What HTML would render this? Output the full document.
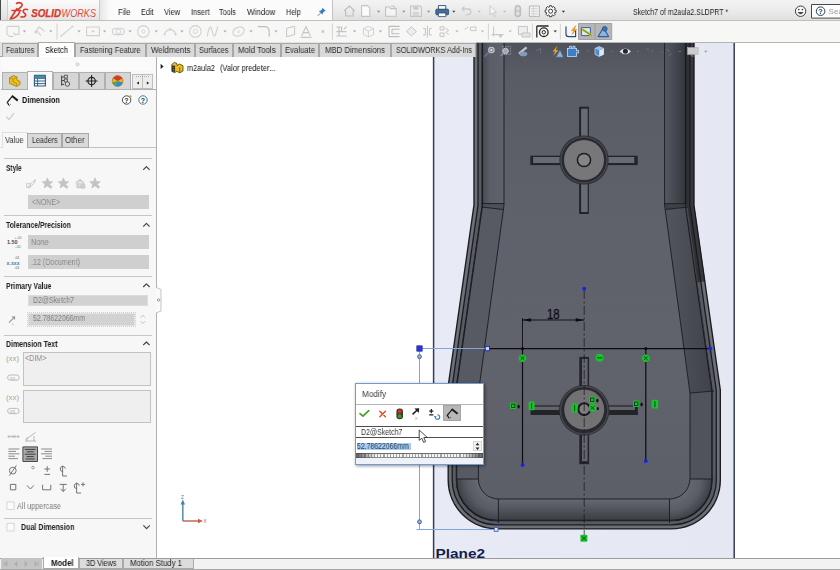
<!DOCTYPE html>
<html lang="en">
<head>
<meta charset="utf-8">
<title>Sketch7 of m2aula2.SLDPRT</title>
<style>
*{box-sizing:border-box;margin:0;padding:0}
html,body{width:840px;height:570px;overflow:hidden;background:#fff}
body{position:relative;font-family:"Liberation Sans",sans-serif;font-size:8px;color:#1a1a1a;line-height:1}
.a{position:absolute}
.t{position:absolute;white-space:nowrap;line-height:10px;height:10px;will-change:transform}
/* top chrome */
#title{left:0;top:0;width:840px;height:21px;background:linear-gradient(#f3f3f3 0,#ececec 45%,#dfdfdf 100%)}
#logo{left:7px;top:0;width:93px;height:21px;background:linear-gradient(#fbfbfb 0,#f1f1f1 50%,#e3e3e3 100%);border-left:1px solid #cfcfcf;border-right:1px solid #c9c9c9}
#menu{left:100px;top:0;width:233px;height:21px;background:linear-gradient(90deg,#e6e6e6 0,#fbfbfb 10px);border-right:1px solid #c4c4c4}
#tb2{left:0;top:20.4px;width:840px;height:21.6px;background:#f7f7f6;border-top:1.4px solid #bfbfbf}
#tabs{left:0;top:42px;width:476px;height:15px;background:#e3e3e3;border-bottom:1px solid #a9a9a9}
.tab{position:absolute;top:43px;height:14px;background:#d9d9d9;border:1px solid #a8a8a8;border-bottom:none;font-size:8.1px;line-height:12px;text-align:center;white-space:nowrap;color:#222}
.tab.on{background:#fff;top:42px;height:15px;color:#000}
/* left panel */
#panel{left:0;top:57px;width:157px;height:501px;background:#f7f7f7;border-right:1.2px solid #b0b0b0}
.ptab{position:absolute;top:71.6px;height:17.4px;width:26px;background:#d6d6d6;border:1px solid #b0b0b0;border-bottom:none}
.ptab.on{background:#f9f9f9;top:70.6px;height:19.4px}
.sec{position:absolute;left:4px;width:148px;height:1px;background:#c6c6c6}
.hd{position:absolute;left:6px;font-weight:bold;font-size:8px;line-height:10px;white-space:nowrap;color:#222}
.chev{position:absolute;left:142px;width:9px;height:6px}
.dd{position:absolute;left:28px;width:121px;height:13.6px;background:#cfcfcf;font-size:8px;line-height:13px;padding-left:4px;color:#7d7d7d;white-space:nowrap}
.box{position:absolute;left:23px;width:128px;background:#efefef;border:1px solid #c2c2c2}
#btabs{left:0;top:558px;width:840px;height:12px;background:#f2f2f2;border-top:1px solid #9c9c9c;border-bottom:1.4px solid #a8a8a8}
</style>
</head>
<body>

<!-- ===== graphics viewport ===== -->
<svg class="a" id="vp" style="left:0;top:0" width="840" height="570" viewBox="0 0 840 570">
<defs>
<linearGradient id="gFloor" x1="0" y1="0" x2="0" y2="1">
<stop offset="0" stop-color="#4f525a"/><stop offset="0.07" stop-color="#595c64"/><stop offset="0.4" stop-color="#5f626b"/><stop offset="0.75" stop-color="#60636c"/><stop offset="1" stop-color="#5c5f68"/>
</linearGradient>
<linearGradient id="gPlane" x1="0" y1="0" x2="1" y2="0">
<stop offset="0" stop-color="#e8ebf5"/><stop offset="1" stop-color="#e5e8f2"/>
</linearGradient>
<linearGradient id="gRW" x1="0" y1="0" x2="1" y2="0">
<stop offset="0" stop-color="#555861"/><stop offset="1" stop-color="#34363d"/>
</linearGradient>
<linearGradient id="gBW" x1="0" y1="0" x2="0" y2="1">
<stop offset="0" stop-color="#666972"/><stop offset="1" stop-color="#3b3d44"/>
</linearGradient>
<linearGradient id="gLW" x1="0" y1="0" x2="1" y2="0"><stop offset="0" stop-color="#474a52"/><stop offset="0.35" stop-color="#5b5e67"/><stop offset="1" stop-color="#5f626b"/></linearGradient>
<linearGradient id="gRW2" x1="0" y1="0" x2="1" y2="0"><stop offset="0" stop-color="#53565e"/><stop offset="1" stop-color="#40424a"/></linearGradient>
<radialGradient id="gCL" gradientUnits="userSpaceOnUse" cx="498.4" cy="479" r="42"><stop offset="0.45" stop-color="#666972"/><stop offset="0.75" stop-color="#585b64"/><stop offset="1" stop-color="#3e4047"/></radialGradient>
<radialGradient id="gCR" gradientUnits="userSpaceOnUse" cx="669.5" cy="479" r="42"><stop offset="0.45" stop-color="#666972"/><stop offset="0.75" stop-color="#5a5d66"/><stop offset="1" stop-color="#3e4047"/></radialGradient>
</defs>
<!-- plane -->
<rect x="433" y="43" width="301.5" height="515" fill="url(#gPlane)"/>
<line x1="433.6" y1="43" x2="433.6" y2="558" stroke="#323c5e" stroke-width="1.5"/>
<line x1="734.2" y1="43" x2="734.2" y2="558" stroke="#323c5e" stroke-width="1.5"/>
<!-- outer body (rim colour) -->
<path d="M473.30 42 L473.30 205.00 L447.50 386.00 L447.50 480 A49.50 49.50 0 0 0 497 529.50 L671.5 529.50 A49.50 49.50 0 0 0 721.00 480 L721.00 390.00 L694.60 205.00 L694.60 42 Z" fill="#1b1c20"/>
<path d="M476.00 42 L476.00 205.19 L450.20 386.19 L450.20 480 A46.80 46.80 0 0 0 497 526.80 L671.5 526.80 A46.80 46.80 0 0 0 718.30 480 L718.30 390.19 L691.90 205.19 L691.90 42" fill="none" stroke="#6d7077" stroke-width="2.7"/>
<path d="M480.10 42 L480.10 205.48 L454.30 386.48 L454.30 480 A42.70 42.70 0 0 0 497 522.70 L671.5 522.70 A42.70 42.70 0 0 0 714.20 480 L714.20 390.48 L687.80 205.48 L687.80 42" fill="none" stroke="#585b63" stroke-width="2.9"/>
<path d="M482.50 42 L482.50 205.65 L456.70 386.65 L456.70 480 A40.30 40.30 0 0 0 497 520.30 L671.5 520.30 A40.30 40.30 0 0 0 711.80 480 L711.80 390.65 L685.40 205.65 L685.40 42 Z" fill="#5a5d66"/>
<path d="M690 42 L690 205.4 L701 282" fill="none" stroke="#18191d" stroke-opacity="0.62" stroke-width="8.6"/>
<!-- left upper wall -->
<path d="M482.5 42 L504 42 L504 203.6 L482.5 203.6 Z" fill="url(#gLW)"/>
<path d="M481.5 203.6 L504 203.6 L502.8 209.5 L482 207 Z" fill="#4d5058"/>
<!-- left lower wall -->
<path d="M482 207 L502.8 209.5 L478.4 393 L478.4 479 L456.3 479 L456.3 388 Z" fill="#575a63"/>
<!-- right upper wall -->
<path d="M664.6 42 L686 42 L686 203.7 L664.6 203.7 Z" fill="url(#gRW)"/>
<path d="M664.6 203.7 L686.5 203.7 L687.5 207 L665.5 209.5 Z" fill="#3f4148"/>
<!-- right lower wall -->
<path d="M665.5 209.5 L687.5 207 L712.2 391 L690 393 Z" fill="url(#gRW2)"/>
<path d="M690 393 L712.2 391 L712.2 479 L690 479 Z" fill="#50535b"/>
<!-- bottom wall -->
<path d="M498.4 499 L669.5 499 L669.5 520.7 L498.4 520.7 Z" fill="url(#gBW)"/>
<!-- corner walls -->
<path d="M456.3 479 L478.4 479 A20 20 0 0 0 498.4 499 L498.4 520.7 L497 520.7 A40.7 40.7 0 0 1 456.3 480 Z" fill="url(#gCL)"/>
<path d="M712.2 479 L690 479 A20.5 20.5 0 0 1 669.5 499 L669.5 520.7 L671.5 520.7 A40.7 40.7 0 0 0 712.2 480 Z" fill="url(#gCR)"/>
<!-- floor -->
<path id="floor" d="M504 42 L504 205 L478.4 393 L478.4 479 A20 20 0 0 0 498.4 499 L669.5 499 A20.5 20.5 0 0 0 690 479 L690 393 L664.6 205 L664.6 42 Z" fill="url(#gFloor)"/>
<!-- edge lines -->
<g fill="none" stroke="#1a1b1f" stroke-width="0.9">
<path d="M504 42 L504 205 L478.4 393 L478.4 479 A20 20 0 0 0 498.4 499 L669.5 499 A20.5 20.5 0 0 0 690 479 L690 393 L664.6 205 L664.6 42"/>
<path d="M481 203.6 L504 203.6"/><path d="M482 207 L502.8 209.5"/>
<path d="M664.6 203.7 L687 203.7"/><path d="M665.5 209.5 L688 207"/>
<path d="M690 393 L714 391"/><path d="M690 479 L713 479"/>
<path d="M456 479 L478.4 479"/>
<path d="M498.4 499 L498.4 523"/><path d="M669.5 499 L669.5 523"/>
<path d="M482.50 42 L482.50 205.65 L456.70 386.65 L456.70 480 A40.30 40.30 0 0 0 497 520.30 L671.5 520.30 A40.30 40.30 0 0 0 711.80 480 L711.80 390.65 L685.40 205.65 L685.40 42" stroke-width="1.1"/>
</g>
<!-- crosses -->
<g>
<rect x="579.1" y="106.7" width="9.8" height="31.3" fill="#232428"/>
<rect x="581.1" y="108.7" width="6.6" height="29.3" fill="#686b74"/>
<rect x="579.1" y="182.0" width="9.8" height="32.0" fill="#232428"/>
<rect x="581.1" y="182.0" width="6.6" height="30.0" fill="#686b74"/>
<rect x="530.3" y="155.7" width="31.3" height="9.4" fill="#232428"/>
<rect x="533.1" y="157.0" width="29.3" height="6" fill="#686b74"/>
<rect x="606.0" y="155.7" width="31.7" height="9.4" fill="#232428"/>
<rect x="606.0" y="157.0" width="28.3" height="6" fill="#686b74"/>
<circle cx="584" cy="160" r="24.6" fill="#292a2f"/>
<circle cx="584" cy="160" r="23.1" fill="none" stroke="#44464d" stroke-width="1.5"/>
<circle cx="584" cy="160" r="20" fill="#77777a"/>
<circle cx="584" cy="160" r="6.6" fill="#858587" stroke="#1c1c1f" stroke-width="1.5"/>
</g>
<g>
<rect x="579.3" y="356.9" width="9.8" height="31.3" fill="#232428"/>
<rect x="582.0" y="358.9" width="5.6" height="29.3" fill="#62656e"/>
<rect x="579.3" y="432.2" width="9.8" height="32.0" fill="#232428"/>
<rect x="582.0" y="432.2" width="5.6" height="29.0" fill="#62656e"/>
<rect x="530.5" y="405.4" width="31.3" height="9.6" fill="#232428"/>
<rect x="533.3" y="406.6" width="29.3" height="3.4" fill="#62656e"/>
<rect x="606.2" y="405.4" width="31.7" height="9.6" fill="#232428"/>
<rect x="606.2" y="406.6" width="28.7" height="3.4" fill="#62656e"/>
<circle cx="584.2" cy="410.2" r="25.2" fill="#292a2f"/>
<circle cx="584.2" cy="410.2" r="23.7" fill="none" stroke="#44464d" stroke-width="1.5"/>
<circle cx="584.2" cy="409.59999999999997" r="20" fill="#727275"/>
<circle cx="584.2" cy="409.2" r="5.9" fill="#7e7e80" stroke="#1a1a1d" stroke-width="2.1"/>
</g>
<!-- sketch entities -->
<g id="sketch">
<!-- selected dimension leaders (light blue) -->
<g stroke="#7fa6e0" stroke-width="1" fill="none">
<line x1="419.5" y1="348.5" x2="487" y2="348.5"/>
<line x1="419.5" y1="348.5" x2="419.5" y2="529.5"/>
<line x1="416.5" y1="529.5" x2="497" y2="529.5"/>
</g>
<rect x="416.8" y="345.8" width="5.4" height="5.4" fill="#2a35d8" stroke="#1a1f9a" stroke-width="0.6"/>
<circle cx="419.5" cy="356.7" r="1.9" fill="#9db4dc" stroke="#34509a" stroke-width="0.9"/>
<circle cx="419.5" cy="521.8" r="1.9" fill="#9db4dc" stroke="#34509a" stroke-width="0.9"/>
<rect x="494.2" y="527.5" width="3.8" height="3.8" fill="#dfe6f6" stroke="#3d62b8" stroke-width="0.9"/>
<!-- centreline -->
<line x1="584.2" y1="290" x2="584.2" y2="536" stroke="#17181c" stroke-opacity="0.8" stroke-width="0.9" stroke-dasharray="9 2.5 2 2.5"/>
<circle cx="584.2" cy="288.8" r="2" fill="#1a22e6"/>
<!-- horizontal construction line -->
<line x1="489" y1="348.6" x2="710" y2="348.6" stroke="#0c0c0e" stroke-width="1.2"/>
<rect x="485.3" y="346.5" width="4.2" height="4.2" fill="#c8d2f4" stroke="#2430d0" stroke-width="1"/>
<circle cx="710.2" cy="348.6" r="2.1" fill="#1a22e6"/>
<!-- vertical lines -->
<line x1="522.5" y1="318" x2="522.5" y2="348" stroke="#0c0c0e" stroke-width="0.9"/>
<line x1="522.5" y1="348.6" x2="522.5" y2="464" stroke="#0c0c0e" stroke-width="1.2"/>
<line x1="645.8" y1="348.6" x2="645.8" y2="460" stroke="#0c0c0e" stroke-width="1.2"/>
<circle cx="522.5" cy="348.6" r="1.6" fill="#0c0c0e"/>
<circle cx="645.8" cy="348.6" r="1.6" fill="#0c0c0e"/>
<circle cx="522.6" cy="465" r="2" fill="#1a22e6"/>
<circle cx="645.8" cy="461" r="2" fill="#1a22e6"/>
<!-- dimension 18 -->
<line x1="522.5" y1="320" x2="584.2" y2="320" stroke="#0c0c0e" stroke-width="0.9"/>
<path d="M522.5 320 L531 318.2 L531 321.8 Z M584.2 320 L575.7 318.2 L575.7 321.8 Z" fill="#0c0c0e"/>
<text x="553.2" y="319" font-family="Liberation Sans, sans-serif" font-size="14.8" text-anchor="middle" fill="#0c0c0e" stroke="#0c0c0e" stroke-width="0.3" textLength="12.6" lengthAdjust="spacingAndGlyphs">18</text>
<!-- relation markers -->
<g fill="#16c42c">
<circle cx="522.5" cy="358.2" r="3.8"/><circle cx="645.8" cy="358.2" r="3.8"/>
<circle cx="599.6" cy="357.8" r="4"/>
<rect x="510" y="402.6" width="6.4" height="6.4" rx="1"/><rect x="528.6" y="401.6" width="6" height="8.6" rx="1.5"/>
<rect x="633" y="400.6" width="6.4" height="6.4" rx="1"/><rect x="651.6" y="399.8" width="6.6" height="8.6" rx="1.5"/>
<rect x="571.6" y="403.6" width="6" height="9" rx="1.5"/>
<rect x="589" y="396.6" width="6.4" height="6.4" rx="1"/><rect x="589" y="404.4" width="7" height="7" rx="1.5"/>
<rect x="580.4" y="534.8" width="7" height="7" rx="0.8"/>
</g>
<g stroke="#0a3a10" stroke-width="0.9" fill="none">
<path d="M520.6 356.4 L524.4 360 M524.4 356.4 L520.6 360"/><path d="M643.9 356.4 L647.7 360 M647.7 356.4 L643.9 360"/>
<path d="M597 357.8 L602.2 357.8"/>
<rect x="511.5" y="404.1" width="3.4" height="3.4"/><rect x="634.5" y="402.1" width="3.4" height="3.4"/><rect x="590.5" y="398.1" width="3.4" height="3.4"/>
<path d="M531.6 403 L531.6 409"/><path d="M654.9 401.2 L654.9 407.2"/><path d="M574.6 405 L574.6 411.2"/>
<path d="M590.6 406 L594.4 409.8 M594.4 406 L590.6 409.8"/>
<path d="M582 536.4 L585.8 540.2 M585.8 536.4 L582 540.2"/>
</g>
<g fill="#0b0b0c">
<ellipse cx="518.6" cy="406.6" rx="1.1" ry="1.9"/><ellipse cx="641.6" cy="404.4" rx="1.1" ry="1.9"/><ellipse cx="597.4" cy="400.6" rx="1.1" ry="1.9"/><ellipse cx="597.8" cy="408.6" rx="1" ry="1.6"/>
</g>
</g>
<text x="435.5" y="557.6" font-family="Liberation Sans, sans-serif" font-weight="bold" font-size="12.6" fill="#141c50" textLength="49.5" lengthAdjust="spacingAndGlyphs">Plane2</text>
</svg>
<!-- ===== title bar ===== -->
<div class="a" id="title"></div>
<div class="a" style="left:0;top:0;width:1px;height:570px;background:#4a4a4a"></div>
<div class="a" id="logo"></div>
<div class="a" id="menu"></div>
<svg class="a" style="left:9px;top:1px" width="92" height="20" viewBox="0 0 92 20">
<g transform="translate(-0.9,0) scale(1.1)"><path d="M7.6 2.2 C10.4 0.6 14.4 2.4 12 5.2 L8.8 8 M3.6 8.6 L11.4 8.6 M8 7 L2 16.4 C6.2 15.8 9.2 13.6 10.6 9.8 M17.6 7.8 C14.6 6.8 12.4 8.8 14.6 10.8 C17 12.6 16.2 15 11.8 14.4" fill="none" stroke="#d93a2b" stroke-width="1.5" stroke-linecap="round" stroke-linejoin="round"/></g>
<text x="22.2" y="16" font-family="Liberation Sans, sans-serif" font-size="10" font-weight="bold" font-style="italic" fill="#d8392b" stroke="#d8392b" stroke-width="0.25" textLength="30" lengthAdjust="spacingAndGlyphs">SOLID</text>
<text x="52.6" y="16" font-family="Liberation Sans, sans-serif" font-size="10" font-style="italic" fill="#dc4a3c" textLength="34.4" lengthAdjust="spacingAndGlyphs">WORKS</text>
</svg>
<div class="t" style="left:118.2px;top:7px;font-size:8.5px;transform:scaleX(0.9195);transform-origin:0 50%;color:#1c1c1c">File</div>
<div class="t" style="left:140.6px;top:7px;font-size:8.5px;transform:scaleX(0.8597);transform-origin:0 50%;color:#1c1c1c">Edit</div>
<div class="t" style="left:163.8px;top:7px;font-size:8.5px;transform:scaleX(0.8752);transform-origin:0 50%;color:#1c1c1c">View</div>
<div class="t" style="left:190.6px;top:7px;font-size:8.5px;transform:scaleX(0.8747);transform-origin:0 50%;color:#1c1c1c">Insert</div>
<div class="t" style="left:219px;top:7px;font-size:8.5px;transform:scaleX(0.8567);transform-origin:0 50%;color:#1c1c1c">Tools</div>
<div class="t" style="left:246.8px;top:7px;font-size:8.5px;transform:scaleX(0.9393);transform-origin:0 50%;color:#1c1c1c">Window</div>
<div class="t" style="left:285.6px;top:7px;font-size:8.5px;transform:scaleX(0.8465);transform-origin:0 50%;color:#1c1c1c">Help</div>
<svg class="a" style="left:316.6px;top:6.8px" width="9.6" height="9.6" viewBox="0 0 11 11"><path d="M6.4 1 L10 4.6 L8.6 5 L6.6 7 L6.4 9 L2 4.6 L4 4.4 L6 2.4 Z" fill="#3a7ac2"/><path d="M4 7 L1 10" stroke="#3a7ac2" stroke-width="1.1"/></svg>
<div class="t" style="left:632.5px;top:6.6px;font-size:8.4px;transform:scaleX(0.8283);transform-origin:0 50%;color:#222">Sketch7 of m2aula2.SLDPRT *</div>
<div class="a" id="tb2"></div>
<div class="a" id="tabs"></div><div class="a" style="left:476px;top:41.6px;width:364px;height:1px;background:#b4b4b4"></div>
<svg class="a" style="left:0;top:0" width="840" height="43" viewBox="0 0 840 43" fill="none" stroke-linejoin="round">
<path d="M344 11 L349.4 6 L354.8 11 M345.6 10.4 L345.6 16 L353.2 16 L353.2 10.4" stroke="#bdbdbd" stroke-width="1.1"/><path d="M361.6 5.6 L367.6 5.6 L369.8 7.8 L369.8 16.4 L361.6 16.4 Z" stroke="#c4c4c4" stroke-width="1.1" fill="#fbfbfb"/><path d="M377.0 10.7 L380.20000000000005 10.7 L378.6 12.7 Z" fill="#8e8e8e"/><path d="M385.6 16.2 L385.6 7 L389.4 7 L390.6 8.6 L396.2 8.6 L396.2 16.2 Z" stroke="#c2c2c2" stroke-width="1.1" fill="#f4f4f4"/><path d="M391 6.2 L394.6 6.2 L394.6 9" stroke="#c2c2c2" stroke-width="1"/><path d="M402.2 10.7 L405.40000000000003 10.7 L403.8 12.7 Z" fill="#8e8e8e"/><path d="M410.6 6 L420 6 L421.4 7.4 L421.4 16.4 L410.6 16.4 Z" stroke="#c2c2c2" stroke-width="1.1" fill="#f1f1f1"/><rect x="413" y="6.4" width="5.6" height="3.4" fill="#cdcdcd"/><rect x="412.6" y="11.6" width="6.6" height="4.6" fill="#d6d6d6"/><path d="M427.0 10.7 L430.20000000000005 10.7 L428.6 12.7 Z" fill="#8e8e8e"/><rect x="438.4" y="5.6" width="7.4" height="4" fill="#fff" stroke="#2c4a6a" stroke-width="0.9"/><rect x="435.8" y="9.2" width="12.8" height="5.6" rx="1" fill="#3f6e9c" stroke="#27425e" stroke-width="0.8"/><rect x="438.4" y="13" width="7.4" height="3.6" fill="#fff" stroke="#2c4a6a" stroke-width="0.8"/><path d="M452.2 10.7 L455.40000000000003 10.7 L453.8 12.7 Z" fill="#444"/><path d="M462.4 9 L468 9 A2.8 2.8 0 0 1 468 14.6 L465.6 14.6 M464.4 6.8 L462 9 L464.4 11.2" stroke="#cccccc" stroke-width="1.3"/><path d="M477.59999999999997 10.7 L480.8 10.7 L479.2 12.7 Z" fill="#bebebe"/><path d="M490 5.6 L490 15 L492.4 13 L494 16.6 L495.4 16 L493.8 12.6 L496.6 12.4 Z" stroke="#c8c8c8" stroke-width="0.9" fill="#f6f6f6"/><path d="M503.0 10.7 L506.20000000000005 10.7 L504.6 12.7 Z" fill="#bebebe"/><rect x="515" y="5.4" width="5.6" height="11.4" rx="2.6" fill="#c9c9c9" stroke="#b2b2b2" stroke-width="0.8"/><circle cx="517.8" cy="8.6" r="1.5" fill="#e6e6e6"/><circle cx="517.8" cy="13.4" r="1.5" fill="#e6e6e6"/><rect x="529.4" y="6" width="10" height="10.4" fill="#f2f2f2" stroke="#b6b6b6" stroke-width="1"/><path d="M531 8.6 L538 8.6 M531 11.2 L538 11.2 M531 13.8 L538 13.8 M533.4 6 L533.4 16.4" stroke="#d1d1d1" stroke-width="0.9"/><path d="M556.09 10.09 L556.09 12.31 L554.68 12.55 L554.44 13.13 L555.27 14.29 L553.69 15.87 L552.53 15.04 L551.95 15.28 L551.71 16.69 L549.49 16.69 L549.25 15.28 L548.67 15.04 L547.51 15.87 L545.93 14.29 L546.76 13.13 L546.52 12.55 L545.11 12.31 L545.11 10.09 L546.52 9.85 L546.76 9.27 L545.93 8.11 L547.51 6.53 L548.67 7.36 L549.25 7.12 L549.49 5.71 L551.71 5.71 L551.95 7.12 L552.53 7.36 L553.69 6.53 L555.27 8.11 L554.44 9.27 L554.68 9.85 Z" fill="#f4f4f4" stroke="#2e2e2e" stroke-width="0.9"/><circle cx="550.6" cy="11.2" r="2" fill="#fff" stroke="#2e2e2e" stroke-width="0.9"/><path d="M561.8 10.7 L565.0 10.7 L563.4 12.7 Z" fill="#333"/><circle cx="800.6" cy="11.2" r="5.2" stroke="#3a3a3a" stroke-width="1" fill="#fafafa"/><circle cx="798.8" cy="9.6" r="0.8" fill="#333"/><circle cx="802.4" cy="9.6" r="0.8" fill="#333"/><path d="M797.6 12 Q800.6 16.4 803.6 12 Z" fill="#444"/><rect x="811.5" y="4.5" width="32" height="13.6" fill="#fcfcfc" stroke="#4a4a4a" stroke-width="1"/><circle cx="820.6" cy="11.2" r="4.3" stroke="#23405f" stroke-width="1" fill="#fff"/><text x="820.6" y="13.8" font-family="Liberation Sans, sans-serif" font-size="7.4" font-weight="bold" text-anchor="middle" fill="#23405f">?</text><text x="828.6" y="14" font-family="Liberation Sans, sans-serif" font-size="8" fill="#9a9a9a">Sea</text><path d="M7 26.4 L19 26.4 L19 34.4 L15 34.4 M13.6 36.4 L9.6 36.4 L7 34.4 L7 26.4 M13.4 32.6 L16 35.4" stroke="#d1d1d1" stroke-width="1.1"/><path d="M22.799999999999997 30.5 L26.0 30.5 L24.4 32.5 Z" fill="#a6a6b6"/><path d="M34.6 32.6 L39.4 27 L44.6 31.2 M37 33.6 L34.6 31.4 M36.6 30.4 L41 35.6" stroke="#d1d1d1" stroke-width="1.2"/><path d="M49.199999999999996 30.5 L52.4 30.5 L50.8 32.5 Z" fill="#a6a6b6"/><path d="M57 23.6 L57 39.6 M332.4 23.6 L332.4 39.6" stroke="#d2d2d2" stroke-width="1"/><path d="M61.2 36 L72.6 26.4" stroke="#d1d1d1" stroke-width="1.1"/><circle cx="61.2" cy="36" r="1" fill="#d1d1d1"/><circle cx="72.6" cy="26.4" r="1" fill="#d1d1d1"/><path d="M77.4 30.5 L80.6 30.5 L79 32.5 Z" fill="#a6a6b6"/><rect x="86.6" y="27" width="12.8" height="8.6" stroke="#d1d1d1" stroke-width="1.1"/><rect x="91.6" y="30.4" width="2.8" height="1.8" fill="#d1d1d1"/><path d="M103.0 30.5 L106.19999999999999 30.5 L104.6 32.5 Z" fill="#a6a6b6"/><rect x="112.4" y="28.2" width="11.8" height="6.4" rx="3.2" stroke="#d1d1d1" stroke-width="1.1"/><rect x="116" y="29.6" width="4.6" height="3.6" stroke="#d1d1d1" stroke-width="0.8"/><path d="M128.4 30.5 L131.6 30.5 L130 32.5 Z" fill="#a6a6b6"/><circle cx="143.4" cy="31.4" r="5.8" stroke="#d1d1d1" stroke-width="1.1"/><circle cx="143.4" cy="31.4" r="1.6" stroke="#d1d1d1" stroke-width="0.8"/><path d="M154.6 30.5 L157.79999999999998 30.5 L156.2 32.5 Z" fill="#a6a6b6"/><path d="M164.6 34.4 A5.6 5.6 0 0 1 175.6 34.4" stroke="#d1d1d1" stroke-width="1.1"/><circle cx="164.6" cy="34.4" r="1.1" fill="#d1d1d1"/><circle cx="175.6" cy="34.4" r="1.1" fill="#d1d1d1"/><circle cx="170" cy="29" r="1.1" fill="#d1d1d1"/><path d="M180.4 30.5 L183.6 30.5 L182 32.5 Z" fill="#a6a6b6"/><circle cx="195.4" cy="31.4" r="5.8" stroke="#d1d1d1" stroke-width="1.1"/><circle cx="195.4" cy="31.4" r="2.2" stroke="#d1d1d1" stroke-width="0.8"/><path d="M207.2 36.4 C208.4 30 209.4 26.4 210.6 27.2 C212 29 212.8 35 214.2 36 C215.4 36.6 216.6 30.4 217.8 26.4" stroke="#d1d1d1" stroke-width="1.1"/><path d="M223.4 30.5 L226.6 30.5 L225 32.5 Z" fill="#a6a6b6"/><ellipse cx="238.6" cy="31.6" rx="6" ry="4.2" transform="rotate(-24 238.6 31.6)" stroke="#d1d1d1" stroke-width="1.1"/><circle cx="238.6" cy="31.6" r="1" stroke="#d1d1d1" stroke-width="0.7"/><path d="M249.4 30.5 L252.6 30.5 L251 32.5 Z" fill="#a6a6b6"/><path d="M257.8 26.6 L265 26.6 A4.2 4.2 0 0 1 269.2 30.8 L269.2 36.6" stroke="#bebebe" stroke-width="1.2"/><path d="M274.4 30.5 L277.6 30.5 L276 32.5 Z" fill="#a6a6b6"/><path d="M286.6 28.4 L294.6 26.2 L294.6 34.6 L286.6 36.8 Z" stroke="#c6c6c6" stroke-width="1"/><path d="M301.6 36 L306 26.4 L310.4 36 M303.2 32.6 L308.8 32.6 M300.6 37.4 L311.6 37.4" stroke="#c6c6c6" stroke-width="1.1"/><rect x="321.6" y="30.2" width="2.6" height="2.6" fill="#c9c9c9"/><path d="M336.4 27 L341.6 27 L341.6 31 M336.4 31.6 L346.4 31.6 M336.4 36 L346.8 36 M339 27 L339 36 M344 29 L346.6 26.6" stroke="#c4c4c4" stroke-width="1.2"/><path d="M353.0 30.5 L356.20000000000005 30.5 L354.6 32.5 Z" fill="#a6a6b6"/><path d="M363.4 28.6 L368.4 26.4 L373.6 28.6 L373.6 34.6 L368.4 37 L363.4 34.6 Z M363.4 28.6 L368.4 31 L373.6 28.6 M368.4 31 L368.4 37" stroke="#d1d1d1" stroke-width="1"/><path d="M378.79999999999995 30.5 L382.0 30.5 L380.4 32.5 Z" fill="#a6a6b6"/><path d="M399.6 26.4 L389 26.4 L389 36.6 L399.6 36.6 M399.6 29.2 L392 29.2 L392 33.8 L399.6 33.8" stroke="#bdbdbd" stroke-width="1.1"/><path d="M406.6 31.4 L411.4 26.8 L416.4 31.4 L411.4 36 Z" stroke="#c4c4c4" stroke-width="1" fill="#ededed"/><path d="M427.4 25.6 L427.4 37.6 M423 28.4 L425.4 28.4 L425.4 35 L423 35 M431.8 28.4 L429.4 28.4 L429.4 35 L431.8 35" stroke="#c4c4c4" stroke-width="1"/><path d="M440 26.8 L444 26.8 L444 30 L440 30 Z M440 33 L444 33 L444 36.4 L440 36.4 Z M445.6 28.4 L448.8 30.4 L445.6 32.4 L448.8 34.6" stroke="#c4c4c4" stroke-width="1"/><path d="M455.4 30.5 L458.6 30.5 L457 32.5 Z" fill="#b6b6c0"/><path d="M464.4 29.4 L468.6 27 M470.6 27 L476 27 L476 30.6 L470.6 30.6 Z" stroke="#c9c9c9" stroke-width="1"/><path d="M480.79999999999995 30.5 L484.0 30.5 L482.4 32.5 Z" fill="#b6b6c0"/><path d="M488.4 23.6 L488.4 39.6 M532.4 23.6 L532.4 39.6 M560.4 23.6 L560.4 39.6" stroke="#d4d4d4" stroke-width="1"/><path d="M493.6 26.4 L493.6 34.6 L503.6 34.6 M491.6 34.6 L493.6 34.6 M493.6 36.6 L493.6 34.6" stroke="#c8c8c8" stroke-width="1.1"/><circle cx="500.6" cy="36" r="1.6" fill="#c9c9c9"/><path d="M508.59999999999997 30.5 L511.8 30.5 L510.2 32.5 Z" fill="#b6b6c0"/><rect x="518.4" y="26.4" width="9" height="8" stroke="#c4c4c4" stroke-width="1" fill="#efefef"/><path d="M522 33 L530 33 L530 37 L522 37 Z" stroke="#c4c4c4" stroke-width="1" fill="#e6e6e6"/><path d="M536.8 26 L548.6 26 M536.8 26 L536.8 37.4" stroke="#2b2b2b" stroke-width="1.3"/><circle cx="543.8" cy="32.2" r="4.3" stroke="#2b2b2b" stroke-width="1.3"/><circle cx="543.8" cy="32.2" r="1.7" stroke="#2b2b2b" stroke-width="1"/><path d="M553.6 30.5 L556.8000000000001 30.5 L555.2 32.5 Z" fill="#333"/><path d="M566 26.4 L566 34 A2.6 2.6 0 0 0 568.6 36.6 L575.6 36.6 L575.6 30" stroke="#2a4a7a" stroke-width="1.2"/><path d="M575.8 25.6 L571.4 30.6 L573.8 30.6 L572 34.4 L576.6 29.4 L574.2 29.4 Z" fill="#f0a020" stroke="#c07010" stroke-width="0.4"/><rect x="578.5" y="23.5" width="16.6" height="16" fill="#b6b6b6" stroke="#a2a2a2" stroke-width="1"/><rect x="595.1" y="23.5" width="16.6" height="16" fill="#b6b6b6" stroke="#a2a2a2" stroke-width="1"/><path d="M581.4 27.6 L590.4 27.6 L590.4 35.6 L581.4 35.6 Z" stroke="#39669c" stroke-width="1" fill="#dfe9f4"/><path d="M582.4 29.4 L591.6 35.4" stroke="#e8c21a" stroke-width="2.4"/><path d="M582.4 29.4 L591.6 35.4" stroke="#3d8f35" stroke-width="0.9"/><path d="M598.2 36.6 L603.4 27.4 L608.6 36.6 Z" stroke="#2d5d9a" stroke-width="1.1" fill="#8fb4de"/><circle cx="604.8" cy="28.8" r="2.4" fill="#3c74b8" stroke="#244e86" stroke-width="0.7"/></svg>
<div class="tab" style="left:2px;width:36px"></div><div class="t" style="left:5.8px;top:45.1px;font-size:8.4px;transform:scaleX(0.8590);transform-origin:0 50%;color:#2a2a2a">Features</div>
<div class="tab on" style="left:38px;width:37px"></div><div class="t" style="left:45.0px;top:44.9px;font-size:8.4px;transform:scaleX(0.8981);transform-origin:0 50%;color:#000">Sketch</div>
<div class="tab" style="left:75px;width:71px"></div><div class="t" style="left:80.2px;top:45.1px;font-size:8.4px;transform:scaleX(0.8914);transform-origin:0 50%;color:#2a2a2a">Fastening Feature</div>
<div class="tab" style="left:146px;width:49px"></div><div class="t" style="left:150.8px;top:45.1px;font-size:8.4px;transform:scaleX(0.9437);transform-origin:0 50%;color:#2a2a2a">Weldments</div>
<div class="tab" style="left:195px;width:38px"></div><div class="t" style="left:199.2px;top:45.1px;font-size:8.4px;transform:scaleX(0.8953);transform-origin:0 50%;color:#2a2a2a">Surfaces</div>
<div class="tab" style="left:233px;width:48px"></div><div class="t" style="left:238.2px;top:45.1px;font-size:8.4px;transform:scaleX(0.9426);transform-origin:0 50%;color:#2a2a2a">Mold Tools</div>
<div class="tab" style="left:281px;width:38px"></div><div class="t" style="left:285.0px;top:45.1px;font-size:8.4px;transform:scaleX(0.9204);transform-origin:0 50%;color:#2a2a2a">Evaluate</div>
<div class="tab" style="left:319px;width:72px"></div><div class="t" style="left:325.0px;top:45.1px;font-size:8.4px;transform:scaleX(0.9273);transform-origin:0 50%;color:#2a2a2a">MBD Dimensions</div>
<div class="tab" style="left:391px;width:85px"></div><div class="t" style="left:395.5px;top:45.1px;font-size:8.4px;transform:scaleX(0.8686);transform-origin:0 50%;color:#2a2a2a">SOLIDWORKS Add-Ins</div>
<div class="a" id="panel"></div>
<div class="a" style="left:1px;top:57px;width:155px;height:14px;background:#fafafa"></div>
<div class="ptab" style="left:2px"></div><div class="ptab on" style="left:27px"></div><div class="ptab" style="left:53px"></div><div class="ptab" style="left:79px"></div><div class="ptab" style="left:105px"></div>
<div class="a" style="left:1px;top:89px;width:155px;height:1px;background:#b0b0b0"></div><div class="a" style="left:28px;top:89px;width:24px;height:1px;background:#f8f8f8"></div>
<div class="a" style="left:132px;top:74px;width:21px;height:15px;background:#ececec;border:1px solid #bdbdbd"></div><div class="a" style="left:142px;top:74px;width:1px;height:15px;background:#bdbdbd"></div>
<svg class="a" style="left:0;top:57px" width="165" height="501" viewBox="0 57 165 501" fill="none" stroke-linejoin="round">
<circle cx="77.5" cy="64.4" r="1.5" stroke="#bdbdbd" stroke-width="0.8" fill="#eee"/><path d="M9.6 77.6 L13.6 75.6 L17 77 L17 80 L20 81.4 L20 84.6 L16.4 86.4 L9.6 83.4 Z" fill="#e8c020" stroke="#a88410" stroke-width="0.9"/><path d="M9.6 77.6 L13.2 79.2 L13.2 82 L16.6 83.4 L16.6 86.2 M13.2 79.2 L17 77" stroke="#a88410" stroke-width="0.7"/><rect x="34.4" y="75.4" width="11" height="10.6" fill="#f4f8fb" stroke="#2a5a78" stroke-width="1.1"/><path d="M34.4 78.4 L45.4 78.4 M34.4 81 L45.4 81 M34.4 83.6 L45.4 83.6 M37.6 78.4 L37.6 86" stroke="#2a5a78" stroke-width="0.9"/><rect x="34.4" y="75.4" width="11" height="3" fill="#4a86a8"/><path d="M61.6 75.6 L61.6 85.6 M61.6 77 L64 77 M61.6 80.6 L64 80.6 M61.6 84.4 L64 84.4" stroke="#444" stroke-width="1"/><rect x="64.4" y="75.2" width="3" height="3" stroke="#444" stroke-width="0.8"/><rect x="64.4" y="79" width="3" height="3" stroke="#444" stroke-width="0.8"/><circle cx="67.4" cy="84" r="2.2" stroke="#444" stroke-width="0.9" fill="#ddd"/><circle cx="91.6" cy="81" r="3.7" stroke="#222" stroke-width="1.2"/><path d="M91.6 75 L91.6 87 M85.6 81 L97.6 81" stroke="#222" stroke-width="1.1"/><circle cx="117.6" cy="81" r="5.4" fill="#e6b822" stroke="#8a6a10" stroke-width="0.6"/><path d="M117.6 81 L113 78.2 A5.4 5.4 0 0 1 122.4 78.6 Z" fill="#d6382a"/><path d="M117.6 81 L122.8 82.6 A5.4 5.4 0 0 1 115 85.8 Z" fill="#3a8ac8"/><path d="M117.6 81 L115 85.8 A5.4 5.4 0 0 1 112.4 82.4 Z" fill="#48a848"/><path d="M139 81.4 L136.6 83 L139 84.6 Z M146.8 81.4 L149.2 83 L146.8 84.6 Z" fill="#222"/><path d="M136 76.6 L149 76.6" stroke="#999" stroke-width="0.8" stroke-dasharray="1 1"/><path d="M8.8 105.2 L7.4 102.2 L12 96.6" stroke="#1a1a1a" stroke-width="1.2" stroke-linejoin="round"/><path d="M11.8 95.8 L17.8 100.6" stroke="#1a1a1a" stroke-width="2"/><path d="M6.6 103 L8.4 101.4 M9.2 105.8 L10.6 104.4" stroke="#2a5a9a" stroke-width="0.9"/><circle cx="126.6" cy="100" r="4.2" stroke="#3a3a3a" stroke-width="0.9" fill="#fff"/><circle cx="143" cy="100" r="4.2" stroke="#2a6f8c" stroke-width="0.9" fill="#fff"/><text x="126.4" y="102.6" font-family="Liberation Sans, sans-serif" font-size="7" font-weight="bold" text-anchor="middle" fill="#2a2a2a">?</text><text x="143" y="102.6" font-family="Liberation Sans, sans-serif" font-size="7" font-weight="bold" text-anchor="middle" fill="#2a2a2a">?</text><circle cx="130.4" cy="96.4" r="1.2" fill="#e8a030"/><path d="M6.6 117 L9 119.6 L13.6 113.6" stroke="#cfcfcf" stroke-width="1.4" stroke-linecap="round"/><path d="M143.20000000000002 169.79999999999998 L146.4 166.6 L149.6 169.79999999999998" stroke="#444" stroke-width="1.2" fill="none"/><path d="M143.20000000000002 226.6 L146.4 223.4 L149.6 226.6" stroke="#444" stroke-width="1.2" fill="none"/><path d="M143.20000000000002 287.0 L146.4 283.79999999999995 L149.6 287.0" stroke="#444" stroke-width="1.2" fill="none"/><path d="M143.20000000000002 345.20000000000005 L146.4 342.0 L149.6 345.20000000000005" stroke="#444" stroke-width="1.2" fill="none"/><path d="M143.4 525.4 L146.6 528.6 L149.79999999999998 525.4" stroke="#444" stroke-width="1.2" fill="none"/><path d="M28 186.6 L33 181.6 L35.6 179.6 L34.4 182.8 L29.6 187.6 Z" stroke="#c2c2c2" stroke-width="0.9"/><rect x="26.6" y="183.6" width="3.6" height="4" stroke="#c2c2c2" stroke-width="0.8"/><path d="M47.4 177.8 L48.9 181.4 L52.7 181.7 L49.8 184.2 L50.7 187.9 L47.4 185.9 L44.1 187.9 L45.0 184.2 L42.1 181.7 L45.9 181.4 Z" fill="#c4c4c4" stroke="#bababa" stroke-width="0.5"/><path d="M49.4 187.0 L52.4 187 M50.9 185.4 L50.9 188.6" stroke="#bcbcbc" stroke-width="0.9"/><path d="M63.4 177.8 L64.9 181.4 L68.7 181.7 L65.8 184.2 L66.7 187.9 L63.4 185.9 L60.1 187.9 L61.0 184.2 L58.1 181.7 L61.9 181.4 Z" fill="#c4c4c4" stroke="#bababa" stroke-width="0.5"/><path d="M65.4 187.0 L68.4 187 M66.9 185.4 L66.9 188.6" stroke="#bcbcbc" stroke-width="0.9"/><path d="M95.0 177.8 L96.5 181.4 L100.3 181.7 L97.4 184.2 L98.3 187.9 L95.0 185.9 L91.7 187.9 L92.6 184.2 L89.7 181.7 L93.5 181.4 Z" fill="#c4c4c4" stroke="#bababa" stroke-width="0.5"/><path d="M97 187 L100 187 M98.5 185.4 L98.5 188.6" stroke="#bcbcbc" stroke-width="0.9"/><path d="M75.6 183 L80 179.4 L84.4 183 M77 182.6 L77 187.6 L83.4 187.6 L83.4 182.6" stroke="#c2c2c2" stroke-width="1" fill="#d9d9d9"/><rect x="81" y="184.6" width="4" height="3.6" fill="#cfcfcf" stroke="#c2c2c2" stroke-width="0.6"/><path d="M140.4 200.60000000000002 L142.8 203.0 L145.2 200.60000000000002" stroke="#b4b4b4" stroke-width="0.9"/><path d="M140.4 240.60000000000002 L142.8 243.0 L145.2 240.60000000000002" stroke="#b4b4b4" stroke-width="0.9"/><path d="M140.4 260.8 L142.8 263.2 L145.2 260.8" stroke="#b4b4b4" stroke-width="0.9"/><text x="7" y="244.4" font-family="Liberation Sans, sans-serif" font-size="5.4" font-weight="bold" fill="#4a4a4a">1.50</text><text x="14.6" y="239.4" font-family="Liberation Sans, sans-serif" font-size="3.6" fill="#2e7a9a">+.01</text><text x="14.6" y="248" font-family="Liberation Sans, sans-serif" font-size="3.6" fill="#2e7a9a">-.01</text><text x="6.6" y="264.6" font-family="Liberation Sans, sans-serif" font-size="5.2" font-weight="bold" fill="#3a8ab0">x.xxx</text><text x="14.6" y="259.4" font-family="Liberation Sans, sans-serif" font-size="3.6" fill="#555">.01</text><text x="14.6" y="268.6" font-family="Liberation Sans, sans-serif" font-size="3.6" fill="#555">.01</text><path d="M9 322.6 L14.4 317.2" stroke="#9a9a9a" stroke-width="1.2"/><path d="M11.4 316.4 L15.2 316.2 L15 320 Z" fill="#9a9a9a"/><path d="M12 323 L14.4 325 L11.6 325.6 Z" fill="#d8d8d8"/><path d="M140.6 317.6 L142.8 315.2 L145 317.6 M140.6 321.2 L142.8 323.6 L145 321.2" stroke="#bdbdbd" stroke-width="0.9"/><path d="M156 287.4 L161 289.4 L161 311 L156 313" stroke="#bdbdbd" stroke-width="0.9" fill="#fafafa"/><circle cx="158.6" cy="300" r="1.2" stroke="#777" stroke-width="0.7"/><text x="6" y="361.4" font-family="Liberation Sans, sans-serif" font-size="7.8" fill="#a6a6a6">(xx)</text><text x="6" y="400.2" font-family="Liberation Sans, sans-serif" font-size="7.8" fill="#a6a6a6">(xx)</text><rect x="7.6" y="375.0" width="11.6" height="5.2" rx="2.6" stroke="#b4b4b4" stroke-width="0.9"/><text x="9.8" y="379.5" font-family="Liberation Sans, sans-serif" font-size="5.4" fill="#b0b0b0">xx</text><rect x="7.6" y="408.4" width="11.6" height="5.2" rx="2.6" stroke="#b4b4b4" stroke-width="0.9"/><text x="9.8" y="412.9" font-family="Liberation Sans, sans-serif" font-size="5.4" fill="#b0b0b0">xx</text><path d="M7.6 436.6 L19.4 436.6 M9.6 435.2 L7.8 436.6 L9.6 438 M17.4 435.2 L19.2 436.6 L17.4 438" stroke="#b0b0b0" stroke-width="0.8"/><text x="11.4" y="438.4" font-family="Liberation Sans, sans-serif" font-size="4.6" fill="#b0b0b0">xx</text><path d="M25 441 L36 441 M25.6 439.4 L33 434.4 L35.6 432.4 M27 441 L27 437.6 M34 441 L34 436" stroke="#a8a8a8" stroke-width="0.8"/><path d="M8.4 449 L19.4 449 M8.4 451.4 L16 451.4 M8.4 453.8 L19.4 453.8 M8.4 456.2 L15 456.2 M8.4 458.6 L18 458.6" stroke="#8a8a8a" stroke-width="1"/><rect x="22.9" y="446.9" width="14.6" height="14.6" fill="#a9a9a9" stroke="#4a4a4a" stroke-width="1"/><path d="M24.8 449.4 L35.6 449.4 M26.6 451.8 L33.8 451.8 M24.8 454.2 L35.6 454.2 M26.6 456.6 L33.8 456.6 M25.6 459 L34.8 459" stroke="#333" stroke-width="0.9"/><path d="M41 449 L52 449 M44.4 451.4 L52 451.4 M41 453.8 L52 453.8 M45.4 456.2 L52 456.2 M42.4 458.6 L52 458.6" stroke="#8a8a8a" stroke-width="1"/><circle cx="12.8" cy="470.6" r="3.4" stroke="#747474" stroke-width="1"/><path d="M9.4 475.6 L16.4 465.4" stroke="#747474" stroke-width="1"/><circle cx="33" cy="467.6" r="1.3" stroke="#8a8a8a" stroke-width="0.8"/><path d="M44.4 469 L50 469 M47.2 466.2 L47.2 471.8 M44.4 474.4 L50 474.4" stroke="#747474" stroke-width="1"/><path d="M62.6 465.6 L62.6 476 M62.6 476 L67 476 M65.4 468.6 A2.6 2.6 0 1 0 62.6 471.6" stroke="#747474" stroke-width="1"/><rect x="10.4" y="484.4" width="5.4" height="5.4" stroke="#747474" stroke-width="1"/><path d="M27 485.4 L30.4 489 L33.8 485.4" stroke="#747474" stroke-width="1"/><path d="M42.6 484.8 L42.6 489.8 L50.8 489.8 L50.8 484.8" stroke="#747474" stroke-width="1"/><path d="M59.6 484.4 L66.8 484.4 M63.2 484.4 L63.2 491.6 M60.6 488.8 L63.2 491.6 L65.8 488.8" stroke="#747474" stroke-width="1"/><path d="M76.6 482.6 L76.6 493 M76.6 493 L81 493 M79.4 485.6 A2.6 2.6 0 1 0 76.6 488.6 M81 484.4 L85 484.4 M83 482.4 L83 486.4" stroke="#747474" stroke-width="1"/><rect x="6.9" y="501.9" width="7.2" height="7.6" fill="#fbfbfb" stroke="#d2d2d2" stroke-width="0.9"/><rect x="6.9" y="523.4" width="7.2" height="7.6" fill="#fbfbfb" stroke="#d2d2d2" stroke-width="0.9"/></svg>
<div class="t" style="left:22.4px;top:95.4px;font-size:8.8px;transform:scaleX(0.8450);transform-origin:0 50%;font-weight:bold;color:#111">Dimension</div>
<div class="a" style="left:1px;top:147px;width:155px;height:1px;background:#c2c2c2"></div>
<div class="a" style="left:2px;top:132px;width:26px;height:16px;background:#f7f7f7;border:1px solid #e0e0e0;border-bottom:none"></div>
<div class="a" style="left:27.4px;top:132.6px;width:34.6px;height:15px;background:#d9d9d9;border:1px solid #a9a9a9"></div>
<div class="a" style="left:61.6px;top:132.6px;width:27px;height:15px;background:#d9d9d9;border:1px solid #a9a9a9"></div>
<div class="t" style="left:5px;top:135.2px;font-size:8.4px;transform:scaleX(0.8841);transform-origin:0 50%;color:#333">Value</div>
<div class="t" style="left:31.6px;top:135.2px;font-size:8.4px;transform:scaleX(0.8458);transform-origin:0 50%;color:#333">Leaders</div>
<div class="t" style="left:65.4px;top:135.2px;font-size:8.4px;transform:scaleX(0.9259);transform-origin:0 50%;color:#333">Other</div>
<div class="sec" style="top:158.4px"></div><div class="sec" style="top:215.4px"></div><div class="sec" style="top:276.2px"></div><div class="sec" style="top:334.6px"></div><div class="sec" style="top:517.8px"></div>
<div class="t" style="left:6px;top:163.4px;font-size:8.4px;transform:scaleX(0.7788);transform-origin:0 50%;font-weight:bold;color:#222">Style</div>
<div class="t" style="left:6px;top:220px;font-size:8.4px;transform:scaleX(0.8229);transform-origin:0 50%;font-weight:bold;color:#222">Tolerance/Precision</div>
<div class="t" style="left:6px;top:280.6px;font-size:8.4px;transform:scaleX(0.8194);transform-origin:0 50%;font-weight:bold;color:#222">Primary Value</div>
<div class="t" style="left:6px;top:338.8px;font-size:8.4px;transform:scaleX(0.8324);transform-origin:0 50%;font-weight:bold;color:#222">Dimension Text</div>
<div class="t" style="left:20.6px;top:522.2px;font-size:8.4px;transform:scaleX(0.8436);transform-origin:0 50%;font-weight:bold;color:#222">Dual Dimension</div>
<div class="dd" style="top:195.2px"></div><div class="dd" style="top:235.4px"></div><div class="dd" style="top:255.4px"></div>
<div class="t" style="left:32.4px;top:197.2px;font-size:9px;transform:scaleX(0.7668);transform-origin:0 50%;color:#8c8c8c">&lt;NONE&gt;</div>
<div class="t" style="left:31.4px;top:237px;font-size:9.2px;transform:scaleX(0.8011);transform-origin:0 50%;color:#888">None</div>
<div class="t" style="left:31.4px;top:257.2px;font-size:9.2px;transform:scaleX(0.7737);transform-origin:0 50%;color:#888">.12 (Document)</div>
<div class="a" style="left:28.4px;top:295px;width:120px;height:11.4px;background:#d2d2d2;border:1px solid #dcdcdc"></div>
<div class="a" style="left:28.4px;top:313px;width:107px;height:12.6px;background:#d2d2d2;border:1px solid #e2e2e2;outline:1px dotted #cfcfcf"></div>
<div class="t" style="left:32.6px;top:295.6px;font-size:8.2px;transform:scaleX(0.8475);transform-origin:0 50%;color:#7e7e7e">D2@Sketch7</div>
<div class="t" style="left:32.6px;top:314.4px;font-size:8.2px;transform:scaleX(0.8462);transform-origin:0 50%;color:#7e7e7e">52.78622066mm</div>
<div class="box" style="top:352.2px;height:33.6px"></div><div class="box" style="top:390px;height:33.4px"></div>
<div class="t" style="left:25.2px;top:352.6px;font-size:8.6px;transform:scaleX(0.8296);transform-origin:0 50%;color:#8e8e8e">&lt;DIM&gt;</div>
<div class="t" style="left:16.8px;top:501px;font-size:8.4px;transform:scaleX(0.8670);transform-origin:0 50%;color:#7c7c7c">All uppercase</div>
<div class="a" id="btabs"></div>
<div class="a" style="left:1px;top:558px;width:41px;height:11px;background:#c4c4c4"></div>
<svg class="a" style="left:0;top:558px" width="44" height="12" viewBox="0 0 44 12"><path d="M7 3.4 L4.6 5.8 L7 8.2 Z M4 3.4 L4 8.2 M17 3.4 L14.6 5.8 L17 8.2 Z M25 3.4 L27.4 5.8 L25 8.2 Z M35 3.4 L37.4 5.8 L35 8.2 Z M38.4 3.4 L38.4 8.2" fill="#adadad" stroke="#adadad" stroke-width="0.8"/></svg>
<div class="a" style="left:42.6px;top:557px;width:36px;height:12px;background:#fff;border:1px solid #a9a9a9;border-top:none"></div>
<div class="a" style="left:78.6px;top:558.6px;width:44.4px;height:10.4px;background:#dcdcdc;border:1px solid #a9a9a9;border-top:none"></div>
<div class="a" style="left:123px;top:558.6px;width:70.8px;height:10.4px;background:#dcdcdc;border:1px solid #a9a9a9;border-top:none"></div>
<div class="t" style="left:51px;top:558.2px;font-size:8.4px;transform:scaleX(0.9338);transform-origin:0 50%;font-weight:bold;color:#111">Model</div>
<div class="t" style="left:86.2px;top:558.4px;font-size:8.4px;transform:scaleX(0.8628);transform-origin:0 50%;color:#222">3D Views</div>
<div class="t" style="left:130px;top:558.4px;font-size:8.4px;transform:scaleX(0.9306);transform-origin:0 50%;color:#222">Motion Study 1</div>
<svg class="a" style="left:158px;top:58px" width="30" height="18" viewBox="158 58 30 18"><path d="M160.6 63.8 L163.6 66.4 L160.6 69 Z" fill="#222"/><path d="M171.8 64.4 L174.4 62.4 L177 63.6 L177 65.6 L179.6 64 L183 65.8 L183 71 L179.8 72.8 L176.8 71.4 L174.6 72.6 L171.8 71.4 Z" fill="#e8be20" stroke="#4a3a08" stroke-width="0.8"/><path d="M174.6 65.8 L174.6 72.4 M179.8 67.4 L179.8 72.6" stroke="#4a3a08" stroke-width="0.7"/><rect x="172" y="65.6" width="2.8" height="6" fill="#2a2a2a"/><circle cx="173.4" cy="67.4" r="0.7" fill="#e04030"/><circle cx="173.4" cy="69.8" r="0.7" fill="#50b040"/></svg>
<div class="t" style="left:186.8px;top:62.7px;font-size:8.6px;transform:scaleX(0.8432);transform-origin:0 50%;color:#111">m2aula2</div>
<div class="t" style="left:219.6px;top:62.7px;font-size:8.6px;transform:scaleX(0.8742);transform-origin:0 50%;color:#111">(Valor predeter...</div>
<svg class="a" style="left:476px;top:43px" width="240" height="16" viewBox="476 43 240 16" fill="none">
<circle cx="491.4" cy="50" r="2.7" stroke="#c2c6ce" stroke-width="1.1" fill="#868a94"/><path d="M489 52.4 L484.4 56.6" stroke="#6a86b0" stroke-width="1.2"/><circle cx="491.4" cy="50" r="1" fill="#e8e8ec"/><rect x="502.6" y="46.6" width="8" height="8" stroke="#9aa0aa" stroke-width="0.8" stroke-dasharray="1.4 1"/><circle cx="505.6" cy="51" r="2.8" fill="#a4a8b2" stroke="#c6cad2" stroke-width="0.9"/><path d="M503.6 53.2 L500.6 56" stroke="#8c96a8" stroke-width="1.1"/><path d="M519 53.6 L526.6 47.4" stroke="#c4c8d0" stroke-width="2.2"/><ellipse cx="523.4" cy="54" rx="3.6" ry="1.9" stroke="#7fa0cc" stroke-width="1" fill="#8c98ac"/><path d="M536 50.6 L540.6 48.4 L540.6 52.8" stroke="#6c7079" stroke-width="1"/><path d="M557.4 46 L552.6 51.4 L555.2 51.4 L553 56 L558.4 50.2 L555.8 50.2 Z" fill="#eaa628"/><path d="M556.4 57 L560 50.4 L563 57 Z" fill="#8eb4dc" stroke="#5f8cc0" stroke-width="0.6"/><rect x="567.6" y="48.6" width="8.8" height="7.8" fill="#3d7ec6" stroke="#cfe0f2" stroke-width="0.8"/><path d="M569.6 48.6 L569.6 46.2 L571.6 46.2 L571.6 48.6 M573 48.6 L573 46.2 L575 46.2 L575 48.6 M576.4 50.4 L578.6 50.4 L578.6 53 L576.4 53" stroke="#cfe0f2" stroke-width="0.8" fill="#3d7ec6"/><path d="M586.6 51 L589 51" stroke="#6c7079" stroke-width="0.9"/><path d="M595 48.4 L599.2 46.6 L603.6 48.4 L603.6 54.4 L599.2 56.4 L595 54.4 Z" fill="#4c8cd0" stroke="#d8e4f2" stroke-width="0.7"/><path d="M599.2 50.2 L603.6 48.4 L603.6 54.4 L599.2 56.4 Z" fill="#dfe8f4"/><path d="M595 48.4 L599.2 50.2 L603.6 48.4 L599.2 46.6 Z" fill="#9cc0e8"/><path d="M611 51.4 L613 51.4" stroke="#6c7079" stroke-width="0.9"/><path d="M619.6 51.4 Q625.2 45.6 631 51.4 Q625.2 57 619.6 51.4 Z" fill="#e9e9ec"/><circle cx="625.4" cy="51.2" r="2.5" fill="#26272c"/><g stroke="#70747d" stroke-width="0.9"><path d="M637 51.4 L639 51.4 M646.4 48.6 L649 50.4 M650.6 52 L653.4 50 M661.4 51.6 L663 51.6 M667 49 L669.6 52 M671.6 53.6 L669 55.4 M678.4 51.6 L681 51.6"/></g><rect x="687.6" y="47.6" width="10.6" height="6.8" fill="#cbcbcd" stroke="#b2b2b6" stroke-width="0.6"/><path d="M691 54.4 L691 56 L694.6 56" stroke="#8a8a90" stroke-width="0.8"/><path d="M704.2 50.8 L707.4 50.8 L705.8 52.8 Z" fill="#9a9a9a"/></svg>
<svg class="a" style="left:176px;top:492px" width="34" height="36" viewBox="176 492 34 36" fill="none"><path d="M182.8 521 L182.8 503" stroke="#5f90ae" stroke-width="1.6"/><path d="M180.6 504.6 L182.8 499.6 L185 504.6 Z" fill="#4f7e9e"/><path d="M182.8 521 L199 521" stroke="#c8705e" stroke-width="1.6"/><path d="M198 518.8 L203 521 L198 523.2 Z" fill="#c06050"/><text x="181" y="498.6" font-family="Liberation Sans, sans-serif" font-size="4.6" fill="#4f7e9e">Z</text><text x="203.4" y="522.8" font-family="Liberation Sans, sans-serif" font-size="4.6" fill="#c06050">X</text></svg>



<!-- ===== Modify dialog ===== -->
<div class="a" id="dlg" style="left:355px;top:383px;width:129px;height:82px;background:#fff;border:1px solid #6f9bd2;box-shadow:1px 1px 3px rgba(0,0,0,.45)">
  <div class="t" style="left:6px;top:5px;font-size:8.6px;color:#3a3a3a;transform:scaleX(0.9521);transform-origin:0 50%">Modify</div>
  <div class="a" style="left:0;top:19.5px;width:127px;height:1px;background:#b4b4b4"></div>
  <div class="a" style="left:87.4px;top:20.8px;width:17.4px;height:16.6px;background:#b7b7b7;border:1px solid #a4a4a4"></div>
  <svg class="a" style="left:0;top:20px" width="127" height="20" viewBox="0 0 127 20">
    <path d="M4 9.6 L6.9 12.2 L12.8 6.6" fill="none" stroke="#459a22" stroke-width="1.6" stroke-linecap="round" stroke-linejoin="round"/>
    <path d="M23.8 7.2 L29.4 12.8 M29.4 7.2 L23.8 12.8" fill="none" stroke="#e24c1c" stroke-width="1.4" stroke-linecap="round"/>
    <rect x="40.4" y="4.4" width="6.6" height="10.8" rx="3" fill="#3b3d2c"/>
    <circle cx="43.7" cy="7.5" r="1.9" fill="#d8321e"/><circle cx="43.7" cy="12.2" r="1.9" fill="#3f9a36"/>
    <path d="M56.6 10.4 L62 5.2" stroke="#1e1e1e" stroke-width="1.5" fill="none"/><path d="M58.4 4.6 L63.2 4.2 L62.8 9 Z" fill="#1e1e1e"/>
    <path d="M59.6 12.6 L62.4 15 L59 15.8 Z" fill="#d2d2d2"/>
    <path d="M73.2 7.2 L77.4 7.2 M75.3 5.1 L75.3 9.3 M73.2 10.9 L77.4 10.9" stroke="#1e1e1e" stroke-width="1.2" fill="none"/>
    <path d="M79.2 13.6 A2.3 2.3 0 1 0 81.4 10.7" stroke="#2f7fc4" stroke-width="1.1" fill="none"/><path d="M77.9 12 L79.3 14.4 L80.7 12.3 Z" fill="#2f7fc4"/>
    <path d="M92.8 14 L91.4 11.2 L95.8 5.8" stroke="#1c1c1c" stroke-width="1.2" fill="none" stroke-linejoin="round"/>
    <path d="M95.6 5 L101.6 9.8" stroke="#1c1c1c" stroke-width="2" fill="none"/>
    <path d="M90.6 11.8 L92.4 10.2 M93.2 14.6 L94.6 13.2" stroke="#1c1c1c" stroke-width="0.9" fill="none"/>
  </svg>
  <div class="a" style="left:0;top:41.5px;width:127px;height:12px;background:#fff;border-top:1px solid #4c4c4c;border-bottom:1px solid #4c4c4c"></div>
  <div class="t" style="left:4.6px;top:42.5px;font-size:8.4px;color:#333;transform:scaleX(0.8366);transform-origin:0 50%">D2@Sketch7</div>
  <div class="a" style="left:0;top:54.5px;width:127px;height:14px;background:#fff"></div>
  <div class="a" style="left:1px;top:58.6px;width:53.6px;height:7.4px;background:#a9cdf0"></div>
  <div class="t" style="left:1.4px;top:57.4px;font-size:8.4px;color:#1d3658;transform:scaleX(0.8225);transform-origin:0 50%">52.78622066mm</div>
  <div class="a" style="left:116.5px;top:56.6px;width:9px;height:10.6px;background:#f2f2f2;border:1px solid #d4d4d4"></div>
  <svg class="a" style="left:116.5px;top:56.6px" width="9" height="11" viewBox="0 0 9 11"><path d="M2.6 4.2 L4.5 1.8 L6.4 4.2 Z M2.6 6.6 L4.5 9 L6.4 6.6 Z" fill="#222"/></svg>
  <div class="a" style="left:0;top:69.4px;width:127px;height:4.6px;background:repeating-linear-gradient(90deg,#f4f4f4 0,#f4f4f4 2px,#a2a2a2 2px,#a2a2a2 3.17px);border-top:1px solid #6d6d6d;border-bottom:1px solid #8a8a8a"></div>
  <div class="a" style="left:0;top:69.4px;width:127px;height:4.6px;background:linear-gradient(90deg,rgba(70,70,70,.85) 0,rgba(70,70,70,0) 16%,rgba(70,70,70,0) 84%,rgba(70,70,70,.85) 100%)"></div>
  <div class="a" style="left:0;top:74px;width:127px;height:6px;background:#edf2fa"></div>
</div>
<!-- mouse cursor -->
<svg class="a" style="left:418px;top:429px" width="12" height="16" viewBox="0 0 12 16"><path d="M1.2 1 L1.2 11.4 L3.8 9.2 L5.6 13.4 L7.6 12.6 L5.8 8.6 L9.2 8.4 Z" fill="#fff" stroke="#333" stroke-width="0.9" stroke-linejoin="round"/></svg>
</body>
</html>
